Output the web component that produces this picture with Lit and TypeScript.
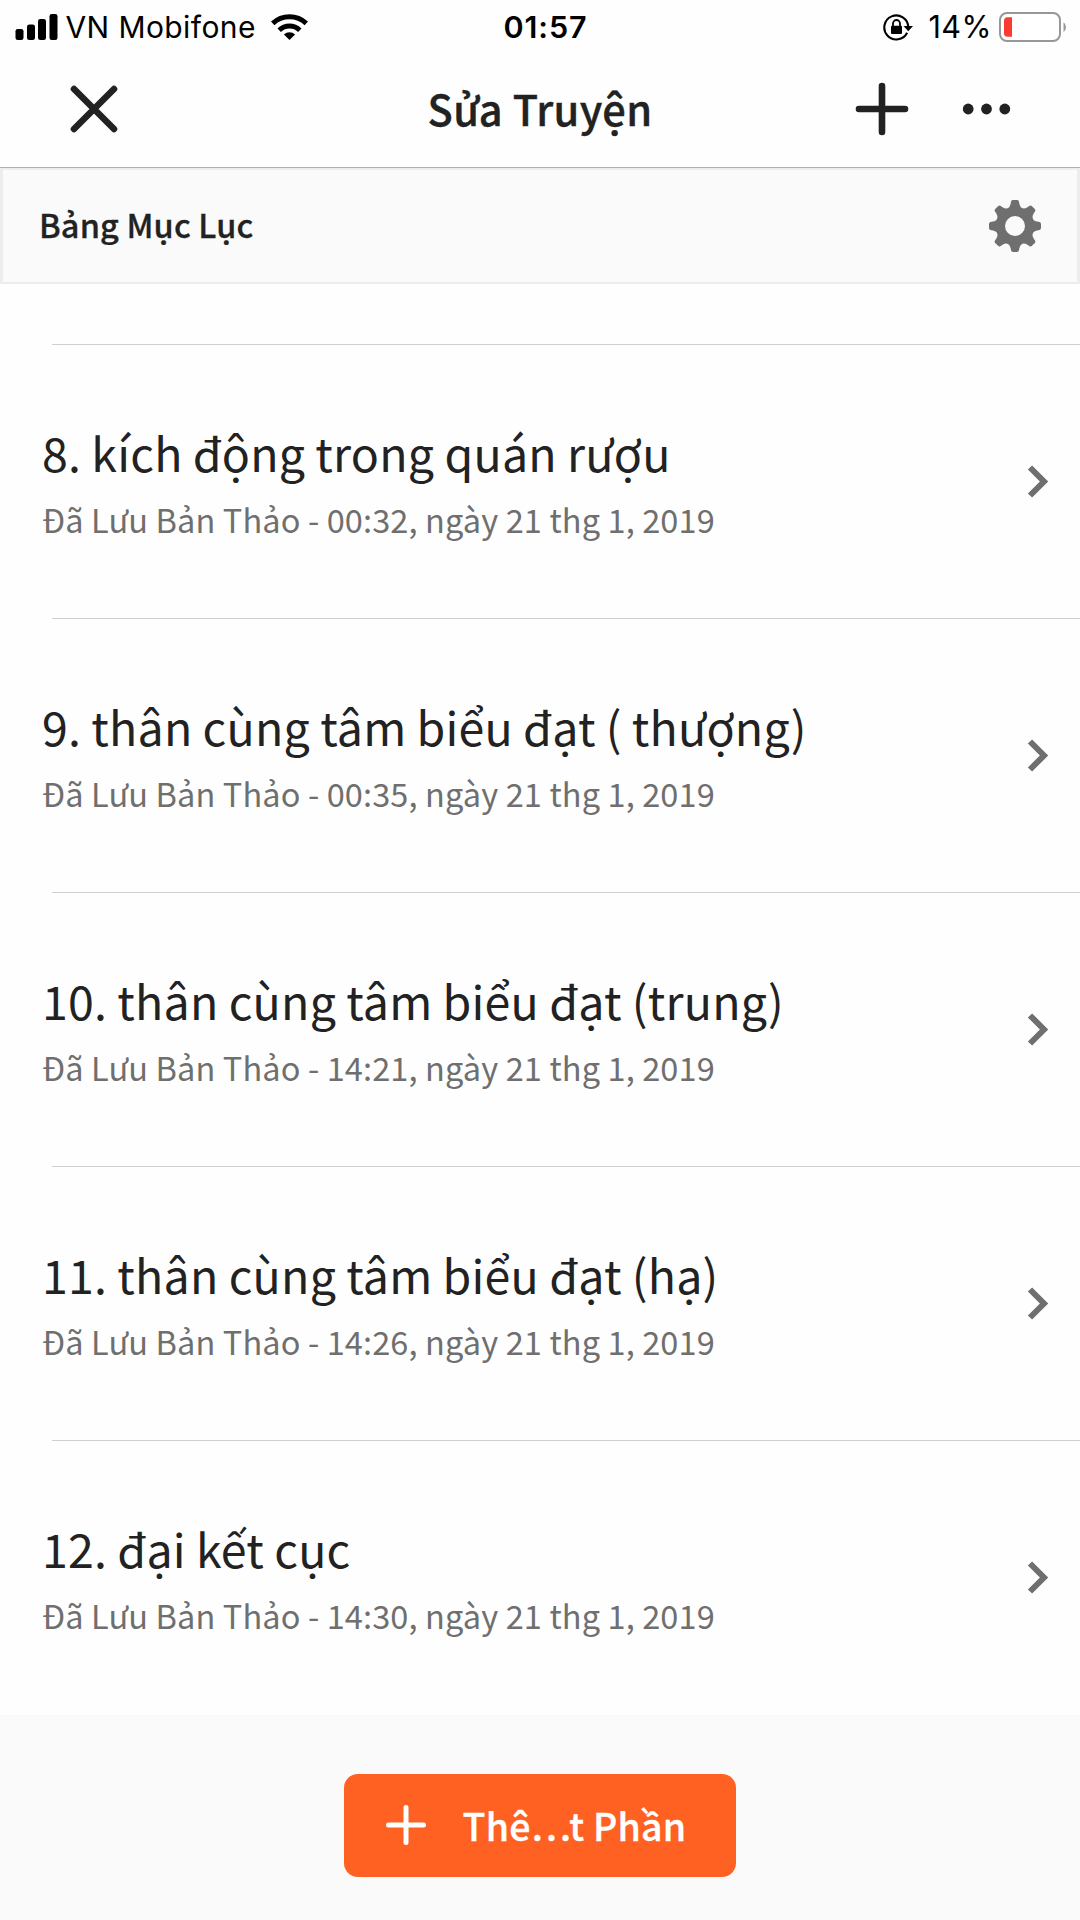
import { LitElement, html, css, svg } from "lit";
import { customElement, property } from "lit/decorators.js";

interface Chapter {
  title: string;
  saved: string;
}

const CHAPTERS: Chapter[] = [
  { title: "8. kích động trong quán rượu", saved: "Đã Lưu Bản Thảo - 00:32, ngày 21 thg 1, 2019" },
  { title: "9. thân cùng tâm biểu đạt ( thượng)", saved: "Đã Lưu Bản Thảo - 00:35, ngày 21 thg 1, 2019" },
  { title: "10. thân cùng tâm biểu đạt (trung)", saved: "Đã Lưu Bản Thảo - 14:21, ngày 21 thg 1, 2019" },
  { title: "11. thân cùng tâm biểu đạt (hạ)", saved: "Đã Lưu Bản Thảo - 14:26, ngày 21 thg 1, 2019" },
  { title: "12. đại kết cục", saved: "Đã Lưu Bản Thảo - 14:30, ngày 21 thg 1, 2019" },
];

@customElement("status-bar")
class StatusBar extends LitElement {
  static styles = css`
    :host {
      display: grid;
      grid-template-columns: 1fr auto 1fr;
      align-items: center;
      height: 54px;
      padding: 0 13px 0 15px;
      box-sizing: border-box;
      color: #000;
      font: 400 30px/54px Inter, "Liberation Sans", sans-serif;
      white-space: nowrap;
    }
    svg { display: block; flex: none; }
    .side { display: flex; align-items: center; }
    .right { justify-content: flex-end; }
    .carrier { margin-left: 7.5px; letter-spacing: 0.4px; }
    .wifi { margin-left: 15px; }
    .time { margin-left: 9px; font-weight: 600; font-size: 30.5px; letter-spacing: 0.9px; }
    .charge { margin: 0 7px 0 15.5px; font-size: 30.5px; letter-spacing: 0.5px; }
  `;

  render() {
    return html`
      <div class="side">
        <svg width="43" height="26" viewBox="0 0 43 26">
          <rect x="0.5" y="15" width="8" height="11" rx="2.3" />
          <rect x="12" y="10.5" width="8" height="15.5" rx="2.3" />
          <rect x="23" y="5" width="8" height="21" rx="2.3" />
          <rect x="34.5" y="0" width="8" height="26" rx="2.3" />
        </svg>
        <span class="carrier">VN Mobifone</span>
        <svg class="wifi" width="37" height="26" viewBox="0 0 37 26">
          <g fill="none" stroke="#000" stroke-width="5">
            <path d="M1.7 9.4a24.5 24.5 0 0 1 33.6 0" />
            <path d="M8.2 16.2a15 15 0 0 1 20.6 0" />
          </g>
          <path d="M18.5 26l-5.6-5.6a8.5 8.5 0 0 1 11.2 0z" />
        </svg>
      </div>
      <span class="time">01:57</span>
      <div class="side right">
        <svg width="30" height="27" viewBox="0 0 30 27">
          <path d="M24.1 18.7A12 12 0 1 1 25.3 13" fill="none" stroke="#000" stroke-width="2.1" />
          <path d="M20.500 12h9.500l-4.700 5.200z" />
          <rect x="8" y="11.700" width="11" height="8.400" rx="1" />
          <path d="M10 12.500v-3a3.500 3.500 0 0 1 7 0v3" fill="none" stroke="#000" stroke-width="1.800" />
        </svg>
        <span class="charge">14%</span>
        <svg width="68" height="30" viewBox="0 0 68 30">
          <rect x="1" y="1" width="60" height="28" rx="7" fill="#fff" stroke="#979797" stroke-width="2" />
          <path d="M13 5.300H8.500a3.500 3.500 0 0 0-3.500 3.500v12.400a3.500 3.500 0 0 0 3.500 3.500H13z" fill="#fc3b30" />
          <path d="M64.500 10.200a6 6 0 0 1 0 9.800z" fill="#979797" />
        </svg>
      </div>
    `;
  }
}

@customElement("nav-header")
class NavHeader extends LitElement {
  static styles = css`
    :host {
      display: grid;
      grid-template-columns: 1fr auto 1fr;
      align-items: center;
      height: 114px;
      padding: 0 68px 3px;
      box-sizing: border-box;
      border-bottom: 1px solid #b0b0b0;
      color: #222;
    }
    svg { display: block; }
    .title {
      margin: 0 0 3px;
      font: 500 41.5px/58px "Noto Sans CJK SC", "Noto Sans", sans-serif;
      letter-spacing: 0.35px;
      -webkit-text-stroke: 0.4px #222;
      white-space: nowrap;
    }
    .actions { display: flex; justify-content: flex-end; align-items: center; gap: 53px; }
  `;

  render() {
    return html`
      <svg width="52" height="52" viewBox="0 0 52 52">
        <path d="M6 6l40 40M46 6L6 46" fill="none" stroke="#222" stroke-width="6.6" stroke-linecap="round" />
      </svg>
      <h1 class="title">Sửa Truyện</h1>
      <div class="actions">
        <svg width="54" height="54" viewBox="0 0 54 54">
          <path d="M27 4v46M4 27h46" fill="none" stroke="#222" stroke-width="6.6" stroke-linecap="round" />
        </svg>
        <svg width="50" height="12" viewBox="0 0 50 12">
          <circle cx="6.2" cy="6" r="5.4" fill="#222" />
          <circle cx="24.5" cy="6" r="5.4" fill="#222" />
          <circle cx="42.8" cy="6" r="5.4" fill="#222" />
        </svg>
      </div>
    `;
  }
}

@customElement("contents-heading")
class ContentsHeading extends LitElement {
  static styles = css`
    :host {
      display: flex;
      align-items: center;
      justify-content: space-between;
      height: 116px;
      padding: 0 36px;
      box-sizing: border-box;
      border: solid #ededed;
      border-width: 2px 3px;
      background: #fafafa;
    }
    svg { display: block; }
    .label {
      margin: 0;
      height: 38px;
      overflow: hidden;
      color: #222;
      font: 500 32.5px/34px "Noto Sans CJK SC", "Noto Sans", sans-serif;
      -webkit-text-stroke: 0.3px #222;
      letter-spacing: 0.15px;
      white-space: nowrap;
    }
  `;

  render() {
    const teeth = [0, 45, 90, 135, 180, 225, 270, 315];
    return html`
      <h2 class="label">Bảng Mục Lục</h2>
      <svg width="52" height="52" viewBox="-26 -26 52 52">
        <circle r="14.5" fill="none" stroke="#6f6f6f" stroke-width="9" />
        ${teeth.map(
          (a) => svg`<path transform="rotate(${a})" fill="#6f6f6f"
            d="M-7.5-17.4Q-5-19-4.4-22L-3.9-24.6Q-3.6-26-2-26H2Q3.6-26 3.9-24.6L4.4-22Q5-19 7.5-17.4L6-14H-6z" />`
        )}
      </svg>
    `;
  }
}

@customElement("chapter-row")
class ChapterRow extends LitElement {
  @property({ attribute: false }) chapter!: Chapter;

  static styles = css`
    :host {
      display: flex;
      align-items: center;
      justify-content: space-between;
      height: 273px;
      padding: 0 30px 0 42px;
      box-sizing: border-box;
      font-family: "Noto Sans CJK SC", "Noto Sans", sans-serif;
      white-space: nowrap;
    }
    svg { display: block; }
    .text { padding-top: 7px; }
    .title {
      margin: 0;
      color: #222;
      font-size: 46.5px;
      font-weight: 400;
      line-height: 66px;
      letter-spacing: 0.24px;
      word-spacing: -0.6px;
    }
    .saved {
      margin: 1px 0 0;
      color: #6f6f6f;
      font-size: 32.5px;
      line-height: 66px;
      letter-spacing: 0.12px;
    }
  `;

  render() {
    return html`
      <div class="text">
        <h3 class="title">${this.chapter.title}</h3>
        <p class="saved">${this.chapter.saved}</p>
      </div>
      <svg width="23" height="34" viewBox="0 0 23 34">
        <path d="M3 2.5L17 16.5L3 30.5" fill="none" stroke="#6f6f6f" stroke-width="6" />
      </svg>
    `;
  }
}

@customElement("app-root")
class AppRoot extends LitElement {
  static styles = css`
    :host {
      display: flex;
      flex-direction: column;
      width: 1080px;
      height: 1920px;
      overflow: hidden;
      background: #fefefe;
    }
    .list { display: flex; flex-direction: column; padding: 60px 0 1px; }
    .rule { height: 1px; margin-left: 52px; background: #cfcfcf; }
    .footer {
      flex: 1;
      display: flex;
      justify-content: center;
      align-items: flex-start;
      padding-top: 59px;
      background: #fafafa;
    }
    .add {
      display: flex;
      align-items: center;
      width: 392px;
      height: 103px;
      padding: 0 0 2px 41px;
      box-sizing: border-box;
      border: 0;
      border-radius: 14px;
      background: #ff6122;
      color: #fff;
      font: 500 37.5px/54px "Noto Sans CJK SC", "Noto Sans", sans-serif;
      letter-spacing: 0.25px;
      -webkit-text-stroke: 0.35px #fff;
      white-space: nowrap;
    }
    .add-icon { display: block; margin-right: 35.5px; }
  `;

  render() {
    return html`
      <status-bar></status-bar>
      <nav-header></nav-header>
      <contents-heading></contents-heading>
      <main class="list">
        ${CHAPTERS.map(
          (chapter) => html`
            <div class="rule"></div>
            <chapter-row .chapter=${chapter}></chapter-row>
          `
        )}
      </main>
      <footer class="footer">
        <button class="add">
          <svg class="add-icon" width="42" height="42" viewBox="0 0 42 42">
            <path d="M21 3.5v35M3.5 21h35" fill="none" stroke="#fff" stroke-width="5" stroke-linecap="round" />
          </svg>
          <span>Thê…t Phần</span>
        </button>
      </footer>
    `;
  }
}
